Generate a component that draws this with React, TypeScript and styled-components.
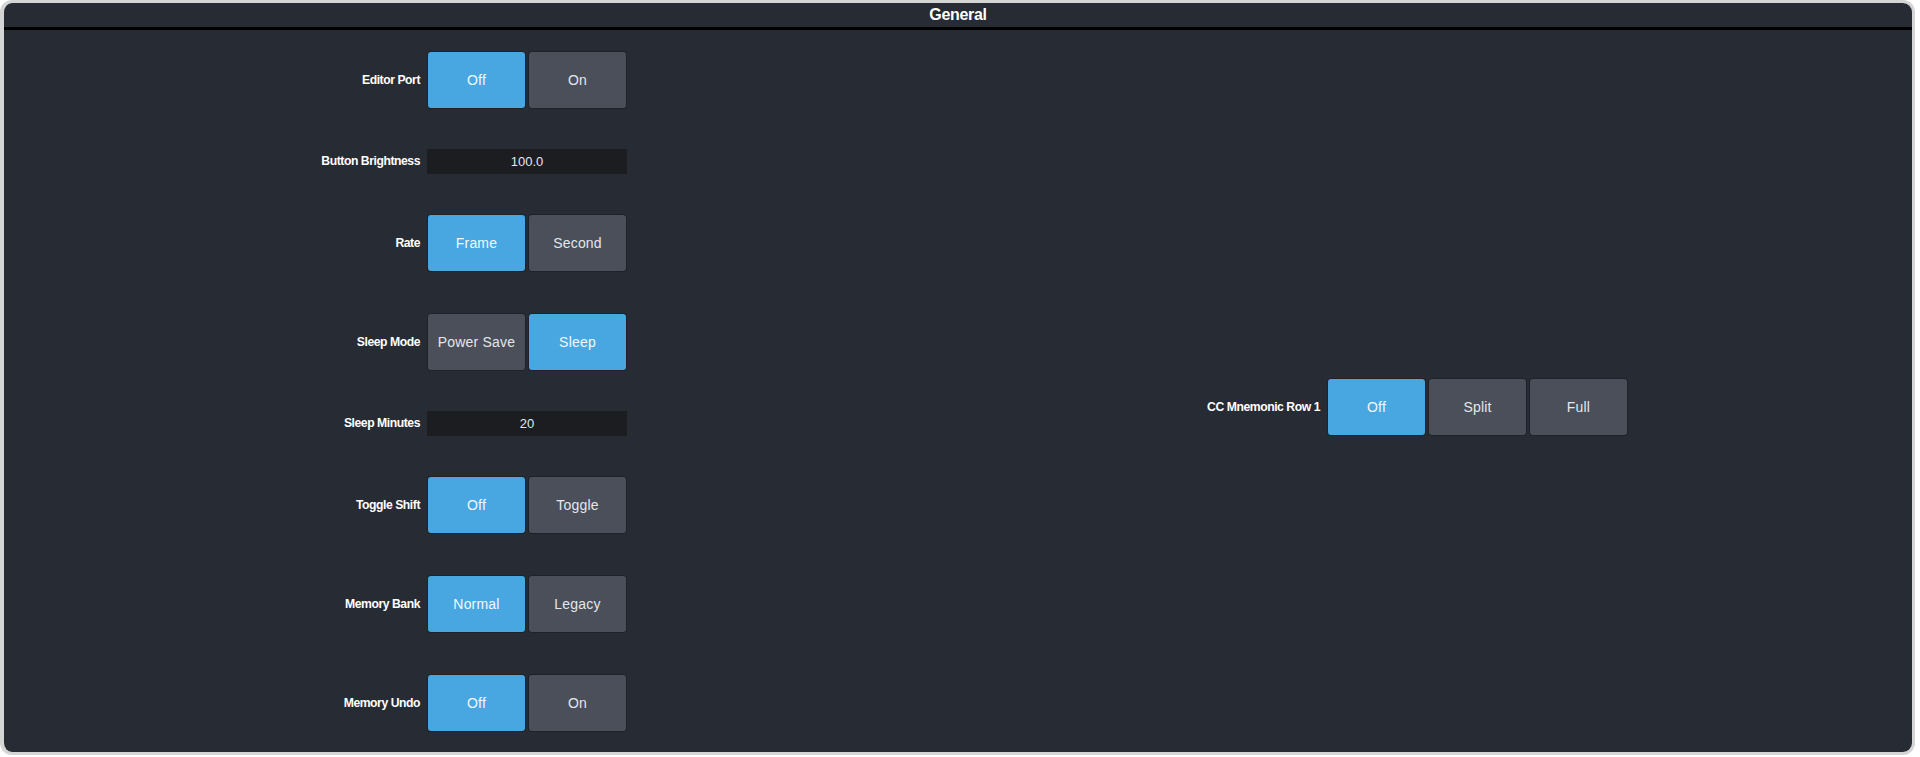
import React from "react"
import styled, { createGlobalStyle } from "styled-components"

type ButtonSetting = { kind: "buttons"; label: string; options: string[]; active: number }
type ValueSetting = { kind: "value"; label: string; value: string }
type Setting = ButtonSetting | ValueSetting

const leftSettings: Setting[] = [
  { kind: "buttons", label: "Editor Port", options: ["Off", "On"], active: 0 },
  { kind: "value", label: "Button Brightness", value: "100.0" },
  { kind: "buttons", label: "Rate", options: ["Frame", "Second"], active: 0 },
  { kind: "buttons", label: "Sleep Mode", options: ["Power Save", "Sleep"], active: 1 },
  { kind: "value", label: "Sleep Minutes", value: "20" },
  { kind: "buttons", label: "Toggle Shift", options: ["Off", "Toggle"], active: 0 },
  { kind: "buttons", label: "Memory Bank", options: ["Normal", "Legacy"], active: 0 },
  { kind: "buttons", label: "Memory Undo", options: ["Off", "On"], active: 0 },
]

const rightSettings: Setting[] = [
  { kind: "buttons", label: "CC Mnemonic Row 1", options: ["Off", "Split", "Full"], active: 0 },
]

const GlobalStyle = createGlobalStyle`
  html, body {
    margin: 0;
    padding: 0;
    background: #ffffff;
  }
  body {
    font-family: "Liberation Sans", Arial, sans-serif;
  }
`

const SettingRow: React.FC<{ setting: Setting; labelWidth: number }> = ({ setting, labelWidth }) => {
  if (setting.kind === "value") {
    return (
      <S.Row $short>
        <S.Label $width={labelWidth}>{setting.label}</S.Label>
        <S.Value>{setting.value}</S.Value>
      </S.Row>
    )
  }
  return (
    <S.Row>
      <S.Label $width={labelWidth}>{setting.label}</S.Label>
      <S.Group>
        {setting.options.map((option, i) => (
          <S.Button key={option} $active={i === setting.active}>
            {option}
          </S.Button>
        ))}
      </S.Group>
    </S.Row>
  )
}

const App: React.FC = () => {
  return (
    <>
      <GlobalStyle />
      <S.Frame>
        <S.Panel>
          <S.Title>General</S.Title>
          <S.Body>
            <S.Column>
              {leftSettings.map((s) => (
                <SettingRow key={s.label} setting={s} labelWidth={416} />
              ))}
            </S.Column>
            <S.Column $centered>
              {rightSettings.map((s) => (
                <SettingRow key={s.label} setting={s} labelWidth={362} />
              ))}
            </S.Column>
          </S.Body>
        </S.Panel>
      </S.Frame>
    </>
  )
}

const S = {
  Frame: styled.div`
    box-sizing: border-box;
    width: 1915px;
    height: 755px;
    border: 3px solid #d5d5d5;
    border-left-width: 4px;
    border-radius: 12px;
    background: #272b33;
    overflow: hidden;
  `,
  Panel: styled.div`
    display: flex;
    flex-direction: column;
    height: 100%;
    background: #272b33;
  `,
  Title: styled.div`
    height: 24px;
    display: flex;
    align-items: center;
    justify-content: center;
    color: #ffffff;
    font-size: 16px;
    font-weight: 700;
    letter-spacing: -0.3px;
    border-bottom: 3px solid #000000;
  `,
  Body: styled.div`
    flex: 1;
    display: grid;
    grid-template-columns: 1fr 1fr;
  `,
  Column: styled.div<{ $centered?: boolean }>`
    display: flex;
    flex-direction: column;
    justify-content: ${(p) => (p.$centered ? "center" : "flex-start")};
    padding-top: ${(p) => (p.$centered ? "31px" : "0")};
  `,
  Row: styled.div<{ $short?: boolean }>`
    height: ${(p) => (p.$short ? "64px" : "99px")};
    display: flex;
    align-items: center;
    gap: 8px;
  `,
  Label: styled.div<{ $width: number }>`
    width: ${(p) => p.$width}px;
    flex: none;
    text-align: right;
    color: #ffffff;
    font-size: 12.2px;
    font-weight: 700;
    letter-spacing: -0.45px;
    white-space: nowrap;
  `,
  Group: styled.div`
    display: flex;
    gap: 4px;
  `,
  Button: styled.div<{ $active?: boolean }>`
    width: 97px;
    height: 56px;
    display: flex;
    align-items: center;
    justify-content: center;
    border-radius: 3px;
    background: ${(p) => (p.$active ? "#48a6e1" : "#4a4f5a")};
    box-shadow: 0 0 0 1px rgba(0, 0, 0, 0.18);
    color: ${(p) => (p.$active ? "#f2f8fd" : "#e4e7ec")};
    font-size: 14px;
    letter-spacing: 0.2px;
    cursor: pointer;
  `,
  Value: styled.div`
    width: 200px;
    height: 25px;
    margin-left: -1px;
    display: flex;
    align-items: center;
    justify-content: center;
    background: #1b1d21;
    color: #e4e7ec;
    font-size: 13px;
  `,
}

export default App
